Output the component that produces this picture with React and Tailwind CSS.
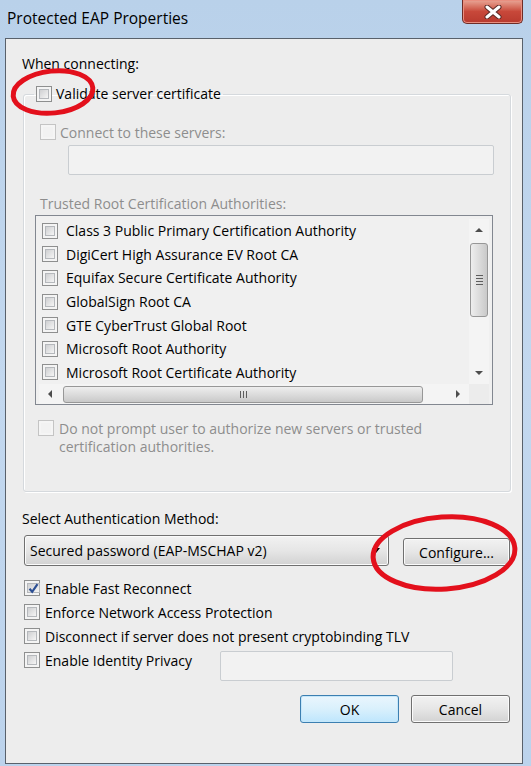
import React from 'react'

const certs = [
  'Class 3 Public Primary Certification Authority',
  'DigiCert High Assurance EV Root CA',
  'Equifax Secure Certificate Authority',
  'GlobalSign Root CA',
  'GTE CyberTrust Global Root',
  'Microsoft Root Authority',
  'Microsoft Root Certificate Authority',
]

function Check({ checked, disabled }) {
  if (disabled) {
    return (
      <span className="w-[16px] h-[16px] shrink-0 border border-[#c4c4c4] bg-[#f5f5f5] flex p-[2px]">
        <span className="flex-1 bg-[#f2f2f2]" />
      </span>
    )
  }
  return (
    <span className="w-[16px] h-[16px] shrink-0 border border-[#8e8f8f] bg-[#f4f4f4] flex p-[2px]">
      <span className="flex-1 border border-[#b5b8bc] bg-linear-to-br from-[#cfd0d2] to-[#f5f5f5] flex items-center justify-center">
        {checked && (
          <svg width="11" height="11" viewBox="0 0 11 11">
            <path d="M1.5 5.8 L4.2 8.8 L9.5 1.2" fill="none" stroke="#2c4f93" strokeWidth="2.2" />
          </svg>
        )}
      </span>
    </span>
  )
}

function WinButton({ children, primary, className = '' }) {
  return (
    <div
      className={`h-[28px] rounded-[3px] border flex items-center justify-center text-[14px] text-black ${
        primary
          ? 'border-[#3c7fb1] bg-linear-to-b from-[#eaf6fd] via-[#d9f0fc] to-[#bee6fd] shadow-[inset_0_0_0_1px_#c5e7fa]'
          : 'border-[#707070] bg-linear-to-b from-[#f2f2f2] via-[#e6e6e6] to-[#d2d2d2] shadow-[inset_0_0_0_1px_#fbfbfb]'
      } ${className}`}
    >
      {children}
    </div>
  )
}

function Arrow({ dir }) {
  const d = {
    up: 'M0 5 L4 1 L8 5 Z',
    down: 'M0 1 L4 5 L8 1 Z',
    left: 'M5 0 L1 4 L5 8 Z',
    right: 'M1 0 L5 4 L1 8 Z',
  }[dir]
  const horiz = dir === 'left' || dir === 'right'
  return (
    <svg width={horiz ? 6 : 8} height={horiz ? 8 : 6} viewBox={horiz ? '0 0 6 8' : '0 0 8 6'}>
      <path d={d} fill="#4d4d4d" />
    </svg>
  )
}

export default function App() {
  return (
    <div
      className="relative w-[531px] h-[766px] overflow-hidden flex flex-col bg-linear-to-b from-[#b9d1ea] via-[#c3d8ef] to-[#bcd3ec]"
      style={{ fontFamily: '"Open Sans", "Noto Sans", Arial, sans-serif' }}
    >
      {/* title bar */}
      <div className="h-[38px] shrink-0 flex items-start">
        <div className="pl-[7px] pt-[7px] text-[15.5px] leading-[22px] text-black">Protected EAP Properties</div>
        <div className="ml-auto mr-[8px] w-[61px] h-[24px] rounded-b-[5px] border border-t-0 border-[#6e2c26] bg-linear-to-b from-[#e8a697] via-[#c8483a] to-[#b83a2e] shadow-[inset_0_0_0_1px_#e98f80] flex items-center justify-center">
          <svg width="18" height="14" viewBox="0 0 18 14">
            <path d="M3 2 L15 12 M15 2 L3 12" stroke="#5a2a26" strokeWidth="5" strokeLinecap="round" />
            <path d="M3 2 L15 12 M15 2 L3 12" stroke="#ffffff" strokeWidth="3" strokeLinecap="round" />
          </svg>
        </div>
      </div>

      {/* client area */}
      <div className="ml-[5px] w-[518px] h-[726px] border border-[#59616b] bg-[#ededed] text-[14px] text-black flex flex-col">
        <div className="pl-[16px] pt-[16px] leading-[18px]">When connecting:</div>

        <fieldset className="ml-[17px] mt-[11px] w-[488px] border border-[#d5d9dd] rounded-[3px] pl-[11px] pb-[35px] shadow-[inset_1px_1px_0_#ffffff,1px_1px_0_#ffffff]">
          <legend className="-ml-[1px] px-[2px] h-[20px] flex items-center gap-[4px]">
            <Check />
            <span className="leading-[18px]">Validate server certificate</span>
          </legend>

          <div className="mt-[19px] ml-[5px] h-[18px] flex items-center gap-[4px] text-[#8d8d8d]">
            <Check disabled />
            <span>Connect to these servers:</span>
          </div>
          <div className="mt-[4px] ml-[33px] w-[426px] h-[30px] border border-[#c9cdd1] rounded-[2px] bg-[#f2f2f2]" />

          <div className="mt-[20px] ml-[5px] leading-[18px] text-[#8d8d8d]">Trusted Root Certification Authorities:</div>

          <div className="mt-[2px] w-[458px] h-[190px] border border-[#828790] bg-[#f0f0f0] px-[3px] pt-[3px] flex flex-col">
            <div className="flex h-[165px]">
              <div className="flex-1 flex flex-col pl-[3px]">
                {certs.map((c) => (
                  <div key={c} className="h-[23.6px] flex items-center gap-[8px]">
                    <Check />
                    <span className="whitespace-nowrap">{c}</span>
                  </div>
                ))}
              </div>
              <div className="w-[20px] flex flex-col items-center bg-[#f4f4f4]">
                <div className="h-[22px] flex items-center justify-center">
                  <Arrow dir="up" />
                </div>
                <div className="w-[18px] h-[74px] mt-[2px] rounded-[3px] border border-[#979797] bg-linear-to-r from-[#eeeeee] via-[#dcdcdc] to-[#c9c9c9] flex flex-col items-center justify-center gap-[2px]">
                  <span className="w-[7px] h-px bg-[#5e5e5e]" />
                  <span className="w-[7px] h-px bg-[#5e5e5e]" />
                  <span className="w-[7px] h-px bg-[#5e5e5e]" />
                  <span className="w-[7px] h-px bg-[#5e5e5e]" />
                </div>
                <div className="mt-auto h-[22px] flex items-center justify-center">
                  <Arrow dir="down" />
                </div>
              </div>
            </div>
            <div className="flex h-[20px]">
              <div className="flex-1 flex items-center bg-[#f4f4f4]">
                <div className="w-[22px] flex justify-center">
                  <Arrow dir="left" />
                </div>
                <div className="ml-[2px] w-[360px] h-[17px] rounded-[3px] border border-[#979797] bg-linear-to-b from-[#eeeeee] via-[#dcdcdc] to-[#c9c9c9] flex items-center justify-center gap-[2px]">
                  <span className="w-px h-[7px] bg-[#5e5e5e]" />
                  <span className="w-px h-[7px] bg-[#5e5e5e]" />
                  <span className="w-px h-[7px] bg-[#5e5e5e]" />
                </div>
                <div className="ml-auto w-[22px] flex justify-center">
                  <Arrow dir="right" />
                </div>
              </div>
              <div className="w-[20px] bg-[#ececec]" />
            </div>
          </div>

          <div className="mt-[15px] ml-[3px] flex items-start gap-[5px] text-[#8d8d8d] leading-[18px]">
            <Check disabled />
            <span>
              Do not prompt user to authorize new servers or trusted
              <br />
              certification authorities.
            </span>
          </div>
        </fieldset>

        <div className="pl-[16px] mt-[18px] leading-[18px]">Select Authentication Method:</div>

        <div className="mt-[6px] ml-[18px] flex items-center gap-[14px]">
          <div className="w-[365px] h-[31px] rounded-[3px] border border-[#707070] bg-linear-to-b from-[#f2f2f2] via-[#e6e6e6] to-[#d2d2d2] shadow-[inset_0_0_0_1px_#fbfbfb] flex items-center pl-[5px] pr-[8px]">
            <span>Secured password (EAP-MSCHAP v2)</span>
            <svg className="ml-auto" width="8" height="5" viewBox="0 0 8 5">
              <path d="M0 0 L8 0 L4 5 Z" fill="#000" />
            </svg>
          </div>
          <WinButton className="w-[107px] mt-[4px]">Configure...</WinButton>
        </div>

        <div className="mt-[10px] ml-[18px] flex flex-col">
          <div className="h-[24px] flex items-center gap-[5px]">
            <Check checked />
            <span>Enable Fast Reconnect</span>
          </div>
          <div className="h-[24px] flex items-center gap-[5px]">
            <Check />
            <span>Enforce Network Access Protection</span>
          </div>
          <div className="h-[24px] flex items-center gap-[5px]">
            <Check />
            <span>Disconnect if server does not present cryptobinding TLV</span>
          </div>
          <div className="flex items-start">
            <div className="h-[24px] flex items-center gap-[5px]">
              <Check />
              <span>Enable Identity Privacy</span>
            </div>
            <div className="ml-auto mr-[69px] mt-[3px] w-[233px] h-[30px] border border-[#c9cdd1] rounded-[2px] bg-[#f2f2f2]" />
          </div>
        </div>

        <div className="mt-[14px] pr-[12px] flex justify-end gap-[12px]">
          <WinButton primary className="w-[99px]">OK</WinButton>
          <WinButton className="w-[99px]">Cancel</WinButton>
        </div>
      </div>

      {/* red annotation rings */}
      <svg className="absolute left-0 top-0 pointer-events-none" width="531" height="766" viewBox="0 0 531 766">
        <ellipse cx="53" cy="92" rx="40" ry="21" fill="none" stroke="#e3101c" strokeWidth="5" transform="rotate(-6 53 92)" />
        <ellipse cx="444" cy="553" rx="71" ry="36" fill="none" stroke="#e3101c" strokeWidth="5" transform="rotate(-4 444 553)" />
      </svg>
    </div>
  )
}
